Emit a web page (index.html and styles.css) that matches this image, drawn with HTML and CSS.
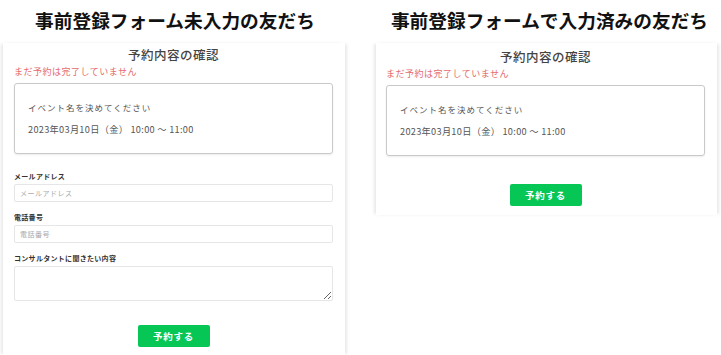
FILE: index.html
```html
<!DOCTYPE html>
<html lang="ja">

<head>
    <meta charset="UTF-8">
    <meta name="viewport" content="width=device-width, initial-scale=1.0">
    <title>予約内容の確認</title>
    <link rel="stylesheet" href="styles.css">
</head>

<body>
    <div class="compare">
        <section class="column column--left">
            <h1 class="column__title">事前登録フォーム未入力の友だち</h1>
            <div class="panel">
                <h2 class="panel__heading">予約内容の確認</h2>
                <p class="panel__notice">まだ予約は完了していません</p>
                <div class="event-card">
                    <p class="event-card__name">イベント名を決めてください</p>
                    <p class="event-card__date">2023年03月10日（金） 10:00 〜 11:00</p>
                </div>
                <form class="entry-form">
                    <label class="entry-form__label" for="mail">メールアドレス</label>
                    <input class="entry-form__input" id="mail" type="text" placeholder="メールアドレス">
                    <label class="entry-form__label" for="tel">電話番号</label>
                    <input class="entry-form__input" id="tel" type="text" placeholder="電話番号">
                    <label class="entry-form__label" for="ask">コンサルタントに聞きたい内容</label>
                    <textarea class="entry-form__textarea" id="ask"></textarea>
                </form>
                <button class="reserve-button reserve-button--form">予約する</button>
            </div>
        </section>
        <section class="column column--right">
            <h1 class="column__title">事前登録フォームで入力済みの友だち</h1>
            <div class="panel panel--short">
                <h2 class="panel__heading">予約内容の確認</h2>
                <p class="panel__notice">まだ予約は完了していません</p>
                <div class="event-card">
                    <p class="event-card__name">イベント名を決めてください</p>
                    <p class="event-card__date">2023年03月10日（金） 10:00 〜 11:00</p>
                </div>
                <button class="reserve-button">予約する</button>
            </div>
        </section>
    </div>
</body>

</html>
```

FILE: styles.css
```css
:root {
    --text-color: #444444;
    --muted-color: #555555;
    --notice-color: #e56b6b;
    --line-green: #06c755;
    --border-color: #c9c9c9;
    --input-border: #e6e6e6;
    --side-shadow: rgba(0, 0, 0, 0.09);
}

body {
    margin: 0;
    background: #fff;
    font-family: "Noto Sans CJK JP", "Noto Sans", sans-serif;
    color: var(--text-color);
}

p,
h1,
h2 {
    margin: 0;
}

.compare {
    display: flex;
    height: 355px;
    overflow: hidden;
}

.column {
    display: flex;
    flex-direction: column;
}

.column--left {
    width: 342px;
    margin-left: 3px;
}

.column--right {
    width: 341px;
    margin-left: 31px;
}

.column__title {
    height: 43px;
    display: flex;
    align-items: center;
    justify-content: center;
    font-size: 18.7px;
    font-weight: 700;
    color: #111;
    line-height: 1;
    white-space: nowrap;
    padding-bottom: 2px;
    box-sizing: border-box;
}

.column--left .column__title {
    padding-left: 2px;
}

.column--right .column__title {
    padding-left: 6px;
}

.panel {
    flex-grow: 1;
    display: flex;
    flex-direction: column;
    padding: 4px 12px 0 11px;
    background: #fff;
    box-shadow: 3px 0 3px -1px var(--side-shadow), -3px 0 3px -1px var(--side-shadow);
}

.panel--short {
    flex-grow: 0;
    height: 172px;
    box-sizing: border-box;
    padding: 6px 12px 0 10px;
}

.panel__heading {
    text-align: center;
    font-size: 12.5px;
    line-height: 16px;
    font-weight: 500;
    letter-spacing: 0.5px;
    color: var(--text-color);
}

.panel__notice {
    margin-top: 3px;
    font-size: 9px;
    line-height: 12px;
    letter-spacing: 0.5px;
    color: var(--notice-color);
}

.event-card {
    margin-top: 5px;
    height: 71px;
    box-sizing: border-box;
    padding: 16px 13px 0;
    border: 1px solid var(--border-color);
    border-radius: 3px;
    box-shadow: 0 1px 2px rgba(0, 0, 0, 0.08);
}

.event-card__name {
    font-size: 8.5px;
    line-height: 14px;
    letter-spacing: 1px;
    color: var(--muted-color);
}

.event-card__date {
    margin-top: 8px;
    font-size: 9.2px;
    line-height: 14px;
    letter-spacing: 0.3px;
    color: var(--muted-color);
}

.entry-form {
    display: flex;
    flex-direction: column;
    margin-top: 16px;
}

.entry-form__label {
    font-size: 7px;
    line-height: 12px;
    font-weight: 700;
    letter-spacing: 0.3px;
    color: #333;
}

.entry-form__input,
.entry-form__textarea {
    margin: 2px 0 9px;
    padding: 0 5px;
    border: 1px solid var(--input-border);
    border-radius: 2px;
    font-family: inherit;
    font-size: 7px;
    letter-spacing: 0.5px;
    box-sizing: border-box;
    outline: none;
}

.entry-form__input {
    height: 18px;
}

.entry-form__input::placeholder {
    color: #aaa;
}

.entry-form__textarea {
    height: 35px;
    margin-bottom: 0;
    resize: vertical;
}

.reserve-button {
    align-self: center;
    width: 72px;
    height: 22px;
    margin-top: 28px;
    border: none;
    border-radius: 2px;
    background-color: var(--line-green);
    color: #fff;
    font-family: inherit;
    font-size: 9.5px;
    font-weight: 700;
    letter-spacing: 0.8px;
    cursor: pointer;
}

.reserve-button--form {
    margin-top: 24px;
}
```
